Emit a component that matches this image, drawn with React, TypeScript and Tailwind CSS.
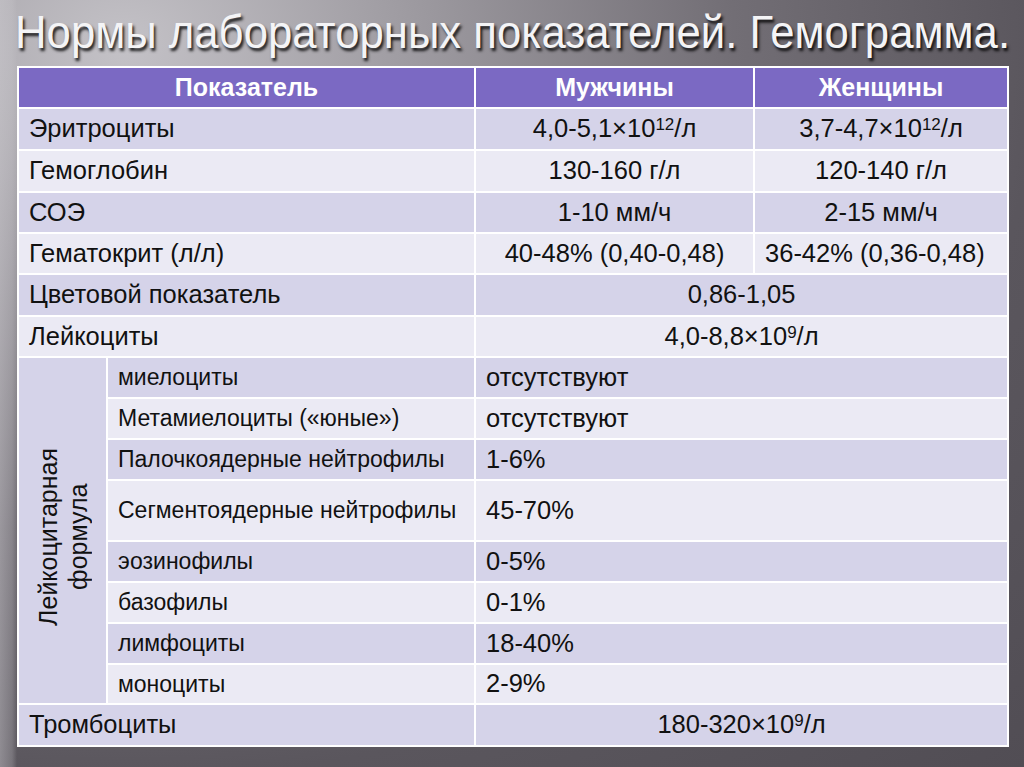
import React from "react";

const dark = "bg-[#d5d3e9]";
const light = "bg-[#ebeaf4]";

type Sub = { name: string; value: string; h: string; bg: string };

const subs: Sub[] = [
  { name: "миелоциты", value: "отсутствуют", h: "h-[41px]", bg: dark },
  { name: "Метамиелоциты («юные»)", value: "отсутствуют", h: "h-[41px]", bg: light },
  { name: "Палочкоядерные нейтрофилы", value: "1-6%", h: "h-[41px]", bg: dark },
  { name: "Сегментоядерные нейтрофилы", value: "45-70%", h: "h-[61px]", bg: light },
  { name: "эозинофилы", value: "0-5%", h: "h-[41px]", bg: dark },
  { name: "базофилы", value: "0-1%", h: "h-[41px]", bg: light },
  { name: "лимфоциты", value: "18-40%", h: "h-[41px]", bg: dark },
  { name: "моноциты", value: "2-9%", h: "h-[40px]", bg: light },
];

const cell = "border-2 border-white px-[10px] align-middle";

function Sup({ children }: { children: React.ReactNode }) {
  return <span className="text-[17px] align-[7px]">{children}</span>;
}

export default function App() {
  return (
    <div
      className="w-[1024px] h-[767px] overflow-hidden bg-[linear-gradient(to_right,rgba(205,203,208,0.45)_0px,rgba(205,203,208,0.25)_12px,rgba(0,0,0,0)_17px),radial-gradient(ellipse_at_12%_6%,#c4c2c7_0%,#9f9ca2_22%,#726e75_48%,#5a565d_72%,#514d54_100%)] text-[#111]"
      style={{ fontFamily: '"Liberation Sans", Arial, sans-serif' }}
    >
      <h1 className="pt-[6px] pl-[15px] h-[58px] text-[47px] leading-[52px] text-[#f4f4f6] [text-shadow:2px_3px_3px_rgba(0,0,0,0.85)] whitespace-nowrap">
        <span className="inline-block origin-left scale-x-[0.93]">Нормы лабораторных показателей. Гемограмма.</span>
      </h1>
      <div className="pl-[17px] pt-[8px]">
        <table className="table-fixed border-collapse w-[990px] border-2 border-white text-[25.5px] leading-none">
          <colgroup>
            <col className="w-[89px]" />
            <col className="w-[368px]" />
            <col className="w-[279px]" />
            <col className="w-[254px]" />
          </colgroup>
          <thead>
            <tr className="h-[41px] bg-[#7b69c3] text-white font-bold text-[25px]">
              <th colSpan={2} className={cell + " text-center"}>Показатель</th>
              <th className={cell + " text-center"}>Мужчины</th>
              <th className={cell + " text-center"}>Женщины</th>
            </tr>
          </thead>
          <tbody>
            <tr className={"h-[42px] " + dark}>
              <td colSpan={2} className={cell}>Эритроциты</td>
              <td className={cell + " text-center whitespace-nowrap"}>4,0-5,1×10<Sup>12</Sup>/л</td>
              <td className={cell + " text-center whitespace-nowrap"}>3,7-4,7×10<Sup>12</Sup>/л</td>
            </tr>
            <tr className={"h-[42px] " + light}>
              <td colSpan={2} className={cell}>Гемоглобин</td>
              <td className={cell + " text-center"}>130-160 г/л</td>
              <td className={cell + " text-center"}>120-140 г/л</td>
            </tr>
            <tr className={"h-[41px] " + dark}>
              <td colSpan={2} className={cell}>СОЭ</td>
              <td className={cell + " text-center"}>1-10 мм/ч</td>
              <td className={cell + " text-center"}>2-15 мм/ч</td>
            </tr>
            <tr className={"h-[41px] " + light}>
              <td colSpan={2} className={cell}>Гематокрит (л/л)</td>
              <td className={"border-2 border-white px-[2px] align-middle text-center whitespace-nowrap"}>40-48% (0,40-0,48)</td>
              <td className={"border-2 border-white pl-[10px] pr-0 align-middle text-left whitespace-nowrap"}>36-42% (0,36-0,48)</td>
            </tr>
            <tr className={"h-[42px] " + dark}>
              <td colSpan={2} className={cell}>Цветовой показатель</td>
              <td colSpan={2} className={cell + " text-center"}>0,86-1,05</td>
            </tr>
            <tr className={"h-[41px] " + light}>
              <td colSpan={2} className={cell}>Лейкоциты</td>
              <td colSpan={2} className={cell + " text-center"}>4,0-8,8×10<Sup>9</Sup>/л</td>
            </tr>
            {subs.map((s, i) => (
              <tr key={s.name} className={s.h}>
                {i === 0 && (
                  <td rowSpan={subs.length} className="border-2 border-white bg-[#d5d3e9] p-0 align-middle">
                    <div className="flex items-center justify-center">
                      <div className="[writing-mode:vertical-rl] rotate-180 text-center text-[25px] leading-[30px] mt-[12px]">
                        Лейкоцитарная<br />формула
                      </div>
                    </div>
                  </td>
                )}
                <td className={cell + " text-[23px] whitespace-nowrap " + s.bg}>{s.name}</td>
                <td colSpan={2} className={cell + " " + s.bg}>{s.value}</td>
              </tr>
            ))}
            <tr className={"h-[42px] " + dark}>
              <td colSpan={2} className={cell}>Тромбоциты</td>
              <td colSpan={2} className={cell + " text-center"}>180-320×10<Sup>9</Sup>/л</td>
            </tr>
          </tbody>
        </table>
      </div>
    </div>
  );
}
